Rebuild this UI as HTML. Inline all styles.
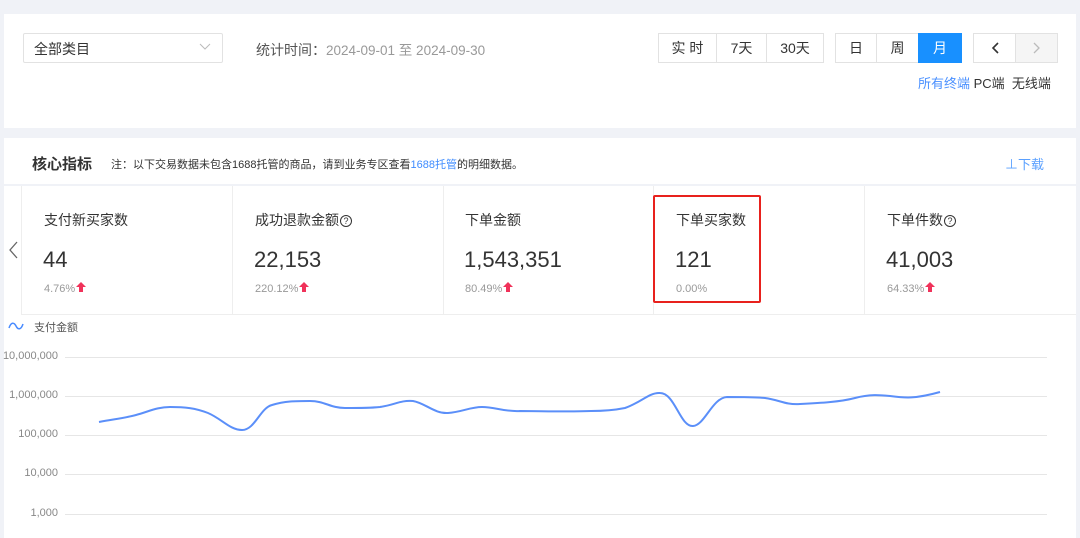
<!DOCTYPE html>
<html><head><meta charset="utf-8"><style>
*{margin:0;padding:0;box-sizing:border-box}
body{width:1080px;height:531px;background:#f0f2f7;position:relative;overflow:hidden;font-family:"Liberation Sans","Noto Sans CJK SC",sans-serif;color:#333}
.a{position:absolute;white-space:nowrap}
.card{position:absolute;background:#fff}
.btn{position:absolute;top:33px;height:30px;border:1px solid #e2e2e2;font-size:14px;line-height:28px;text-align:center;color:#333;background:#fff}
.cell{position:absolute;top:186px;height:129px;width:211px;border-right:1px solid #eee}
.t{position:absolute;left:22px;top:24px;font-size:14px;color:#333}
.v{position:absolute;left:21px;top:61px;font-size:22px;color:#333}
.p{position:absolute;left:22px;top:97px;font-size:11px;color:#999}
.up{display:inline-block;width:0;height:0;border-left:5px solid transparent;border-right:5px solid transparent;border-bottom:5px solid #f0325a;position:relative;top:-5px;margin-left:1px}
.up:after{content:"";position:absolute;left:-2px;top:5px;width:4px;height:5px;background:#f0325a}
.q{display:inline-block;width:12px;height:12px;border:1.3px solid #333;border-radius:50%;font-size:9px;line-height:10px;text-align:center;vertical-align:1px;margin-left:1px}
.yl{position:absolute;right:1022px;font-size:11px;color:#888;text-align:right}
.gl{position:absolute;left:65px;width:982px;height:1px;background:#e6e6e6}
</style></head><body>
<div class="card" style="left:4px;top:14px;width:1072px;height:114px"></div>
<div class="a" style="left:23px;top:33px;width:200px;height:30px;border:1px solid #e2e2e2;border-radius:2px;background:#fff"></div>
<div class="a" style="left:34px;top:39px;font-size:14px">全部类目</div>
<svg class="a" style="left:199px;top:43px" width="12" height="8"><path d="M1 1l5 5 5-5" stroke="#bbb" fill="none"/></svg>
<div class="a" style="left:256px;top:39px;font-size:14px;color:#555">统计时间：<span style="color:#999;font-size:13.5px">2024-09-01 至 2024-09-30</span></div>
<div class="btn" style="left:658px;width:59px">实 时</div>
<div class="btn" style="left:716px;width:51px">7天</div>
<div class="btn" style="left:766px;width:58px">30天</div>
<div class="btn" style="left:835px;width:42px">日</div>
<div class="btn" style="left:876px;width:43px">周</div>
<div class="btn" style="left:918px;width:44px;background:#1890ff;border-color:#1890ff;color:#fff">月</div>
<div class="btn" style="left:973px;width:43px"><svg width="10" height="14" style="margin-top:7px"><path d="M8 2L3 7l5 5" stroke="#333" stroke-width="1.6" fill="none"/></svg></div>
<div class="btn" style="left:1015px;width:43px;background:#f5f5f5"><svg width="10" height="14" style="margin-top:7px"><path d="M2 2l5 5-5 5" stroke="#bbb" stroke-width="1.3" fill="none"/></svg></div>
<div class="a" style="left:918px;top:73px;font-size:13px;color:#4a90ff">所有终端 <span style="color:#333">PC端 &nbsp;无线端</span></div>

<div class="card" style="left:4px;top:138px;width:1072px;height:400px"></div>
<div class="a" style="left:32px;top:153px;font-size:15px;font-weight:bold;color:#333">核心指标</div>
<div class="a" style="left:111px;top:156px;font-size:11px;color:#333">注：以下交易数据未包含1688托管的商品，请到业务专区查看<span style="color:#3f8cff">1688托管</span>的明细数据。</div>
<div class="a" style="left:1005px;top:154px;font-size:13px;color:#5aa0ff">⊥下载</div>
<div class="a" style="left:4px;top:184px;width:1072px;height:2px;background:#f0f2f7"></div>
<div class="a" style="left:21px;top:186px;width:1px;height:129px;background:#eee"></div>
<div class="a" style="left:21px;top:314px;width:1055px;height:1px;background:#eee"></div>
<svg class="a" style="left:7px;top:240px" width="12" height="20"><path d="M10 2L3 10l7 8" stroke="#666" fill="none" stroke-width="1.3"/></svg>
<div class="cell" style="left:22px"><div class="t">支付新买家数</div><div class="v">44</div><div class="p">4.76%<span class="up"></span></div></div>
<div class="cell" style="left:233px"><div class="t">成功退款金额<span class="q">?</span></div><div class="v">22,153</div><div class="p">220.12%<span class="up"></span></div></div>
<div class="cell" style="left:443px"><div class="t">下单金额</div><div class="v">1,543,351</div><div class="p">80.49%<span class="up"></span></div></div>
<div class="cell" style="left:654px"><div class="t">下单买家数</div><div class="v">121</div><div class="p">0.00%</div></div>
<div class="cell" style="left:865px;border-right:none"><div class="t">下单件数<span class="q">?</span></div><div class="v">41,003</div><div class="p">64.33%<span class="up"></span></div></div>
<div class="a" style="left:653px;top:195px;width:108px;height:108px;border:2px solid #e8211d;border-radius:2px"></div>

<svg class="a" style="left:8px;top:321px" width="16" height="10"><path d="M1 7C3 1 6 1 8 5S13 9 15 3" stroke="#4a8cff" fill="none" stroke-width="1.5"/></svg>
<div class="a" style="left:34px;top:319px;font-size:11px;color:#555">支付金额</div>
<div class="gl" style="top:357px"></div><div class="gl" style="top:396px"></div><div class="gl" style="top:435px"></div><div class="gl" style="top:474px"></div><div class="gl" style="top:514px"></div>
<div class="yl" style="top:350px">10,000,000</div>
<div class="yl" style="top:389px">1,000,000</div>
<div class="yl" style="top:428px">100,000</div>
<div class="yl" style="top:467px">10,000</div>
<div class="yl" style="top:507px">1,000</div>
<svg class="a" style="left:0;top:0" width="1080" height="531"><path d="M99 422C115 419 125 418 136 415C150 411 158 407 170 407C185 407 195 408 208 413C222 419 230 430 242 430C255 430 260 408 272 405C285 401 295 401 310 401C325 401 330 408 345 408C365 408 370 408 380 407C395 405 400 400 413 401C425 403 435 414 448 413C462 412 470 407 482 407C495 407 505 412 520 411C540 411 570 412 591 411C607 411 615 410 625 408C640 403 650 392 660 393C675 393 680 427 693 426C705 425 712 398 727 397C740 397 755 397 765 398C780 400 785 405 800 404C820 403 840 402 855 398C870 394 880 395 890 396C905 398 915 399 940 392" stroke="#5b8ff9" stroke-width="2" fill="none"/></svg>
</body></html>
